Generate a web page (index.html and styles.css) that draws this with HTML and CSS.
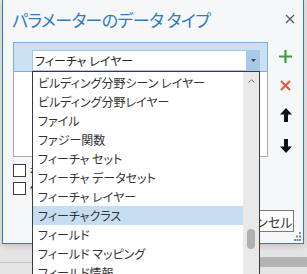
FILE: index.html
```html
<!DOCTYPE html>
<html lang="ja">

<head>
    <meta charset="UTF-8">
    <meta name="viewport" content="width=device-width, initial-scale=1.0">
    <title>パラメーターのデータ タイプ</title>
    <link rel="stylesheet" href="styles.css">
</head>

<body>

    <div class="dialog">
        <!-- Header -->
        <div class="header">
            <h1>パラメーターのデータ タイプ</h1>
            <svg class="close" width="10" height="10" viewBox="0 0 10 10">
                <path d="M1 1 L9 9 M9 1 L1 9" stroke="#5a5a5a" stroke-width="1.3" fill="none"/>
            </svg>
        </div>

        <!-- Table + tools -->
        <div class="main">
            <div class="table">
                <div class="row selected">
                    <div class="row-head"></div>
                    <div class="combo">
                        <div class="combo-text">フィーチャ レイヤー</div>
                        <div class="combo-btn">
                            <svg width="5" height="3" viewBox="0 0 5 3"><path d="M0 0 H5 L2.5 3 Z" fill="#444"/></svg>
                        </div>
                    </div>
                </div>
            </div>
            <div class="tools">
                <svg width="13" height="13" viewBox="0 0 13 13">
                    <path d="M6.5 0 V13 M0 6.5 H13" stroke="#3f9b3f" stroke-width="2.2"/>
                </svg>
                <svg width="11" height="11" viewBox="0 0 11 11">
                    <path d="M1 1 L10 10 M10 1 L1 10" stroke="#d9623d" stroke-width="2.2"/>
                </svg>
                <svg width="12" height="14" viewBox="0 0 12 14">
                    <path d="M6 0 L12 6.5 H8 V14 H4 V6.5 H0 Z" fill="#111"/>
                </svg>
                <svg width="12" height="14" viewBox="0 0 12 14">
                    <path d="M6 14 L12 7.5 H8 V0 H4 V7.5 H0 Z" fill="#111"/>
                </svg>
            </div>
        </div>

        <!-- Options -->
        <div class="options">
            <label class="check"><span class="box"></span>複数の値</label>
            <label class="check"><span class="box"></span>値の範囲</label>
        </div>

        <!-- Buttons -->
        <div class="footer">
            <button class="btn">OK</button>
            <button class="btn">キャンセル</button>
        </div>
        <svg class="grip" width="7" height="9" viewBox="0 0 7 9">
            <rect x="5" y="0" width="2" height="2" fill="#8a8a8a"/>
            <rect x="2" y="3.5" width="2" height="2" fill="#8a8a8a"/>
            <rect x="5" y="3.5" width="2" height="2" fill="#8a8a8a"/>
            <rect x="0" y="7" width="2" height="2" fill="#8a8a8a"/>
            <rect x="2.5" y="7" width="2" height="2" fill="#8a8a8a"/>
            <rect x="5" y="7" width="2" height="2" fill="#8a8a8a"/>
        </svg>
    </div>

    <!-- Window behind the dialog -->
    <div class="under">
        <div class="under-left"></div>
        <div class="under-right"></div>
    </div>

    <!-- Open dropdown list -->
    <div class="dropdown">
        <ul class="items">
            <li>ビルディング分野シーン レイヤー</li>
            <li>ビルディング分野レイヤー</li>
            <li>ファイル</li>
            <li>ファジー関数</li>
            <li>フィーチャ セット</li>
            <li>フィーチャ データセット</li>
            <li>フィーチャ レイヤー</li>
            <li class="active">フィーチャクラス</li>
            <li>フィールド</li>
            <li>フィールド マッピング</li>
            <li>フィールド情報</li>
            <li>ファイル</li>
        </ul>
        <div class="scrollbar">
            <svg class="caret" width="7" height="4" viewBox="0 0 7 4">
                <path d="M0.5 3.5 L3.5 0.8 L6.5 3.5" stroke="#7a7a7a" stroke-width="1" fill="none"/>
            </svg>
            <div class="thumb"></div>
        </div>
    </div>

</body>

</html>
```

FILE: styles.css
```css
body {
    font-family: "Noto Sans CJK JP", "Noto Sans", sans-serif;
    font-feature-settings: "palt";
    background-color: #e4e4e4;
    margin: 0;
    padding: 0 0 0 2px;
    width: 305px;
    height: 274px;
    overflow: hidden;
    position: relative;
}

.dialog {
    width: 300px;
    height: 243px;
    background-color: #f6f7f8;
    border: 1px solid #2b7bd1;
    border-top: none;
    position: relative;
    box-shadow: 0 2px 6px rgba(0, 0, 0, 0.15);
}

.header {
    display: flex;
    justify-content: space-between;
    align-items: center;
    height: 42px;
    padding: 0 8px 0 9px;
}

.header h1 {
    margin: 0 0 3px 0;
    font-size: 17px;
    font-weight: normal;
    color: #2f7bc3;
    letter-spacing: -0.6px;
}

.close {
    margin-bottom: 5px;
}

.main {
    display: flex;
    padding-left: 10px;
}

.table {
    width: 253px;
    height: 114px;
    background-color: #ffffff;
    border: 1px solid #a9abb0;
    border-top: none;
}

.row.selected {
    display: flex;
    height: 28px;
    background-color: #cce0f4;
    border: 1px solid #79afe1;
    margin: 0 -1px;
}

.row-head {
    width: 18px;
}

.combo {
    display: flex;
    margin-top: 7px;
    height: 21px;
    width: 228px;
}

.combo-text {
    flex: 1;
    background-color: #ffffff;
    border: 1px solid #a6c6e6;
    border-right: none;
    font-size: 12px;
    line-height: 19px;
    padding-left: 2px;
    color: #222;
}

.combo-btn {
    width: 14px;
    background-color: #a9c9ea;
    display: flex;
    align-items: center;
    justify-content: center;
}

.tools {
    display: flex;
    flex-direction: column;
    align-items: center;
    gap: 17px;
    margin-left: 11px;
    padding-top: 8px;
    width: 13px;
}

.options {
    display: flex;
    flex-direction: column;
    gap: 5px;
    padding: 7px 0 0 10px;
}

.check {
    display: flex;
    align-items: center;
    gap: 4px;
    font-size: 12px;
    color: #222;
    height: 13px;
}

.box {
    width: 11px;
    height: 11px;
    border: 1px solid #3a3a3a;
    background-color: #ffffff;
}

.footer {
    display: flex;
    justify-content: flex-end;
    gap: 8px;
    padding: 15px 9px 0 0;
}

.btn {
    width: 62px;
    height: 22px;
    background-color: #ffffff;
    border: 1px solid #7a7a7a;
    font-family: inherit;
    font-feature-settings: "palt";
    font-size: 13px;
    color: #333;
    padding: 0;
}

.grip {
    position: absolute;
    right: 2px;
    bottom: 2px;
}

.under {
    display: flex;
    margin: 0 0 0 -2px;
    height: 31px;
}

.under-left {
    width: 259px;
    border-bottom: 1px solid #c8c8c8;
    height: 18px;
}

.under-right {
    flex: 1;
    margin-top: 13px;
    height: 10px;
    background-color: #b3b3b3;
}

.dropdown {
    position: absolute;
    left: 32px;
    top: 71px;
    width: 226px;
    height: 220px;
    background-color: #ffffff;
    border: 1px solid #3a3a3a;
    display: flex;
}

.items {
    list-style: none;
    margin: 0;
    padding: 1px 0 0 0;
    flex: 1;
    overflow: hidden;
}

.items li {
    height: 19px;
    line-height: 19px;
    font-size: 12px;
    color: #333;
    padding-left: 5px;
    white-space: nowrap;
    overflow: hidden;
}

.items li.active {
    background-color: #c7ddf1;
}

.scrollbar {
    width: 16px;
    background-color: #e9e9e9;
    display: flex;
    flex-direction: column;
    align-items: center;
}

.caret {
    margin-top: 7px;
}

.thumb {
    width: 8px;
    height: 20px;
    margin-top: 146px;
    border-radius: 4px;
    background-color: #b0b0b0;
}
```
